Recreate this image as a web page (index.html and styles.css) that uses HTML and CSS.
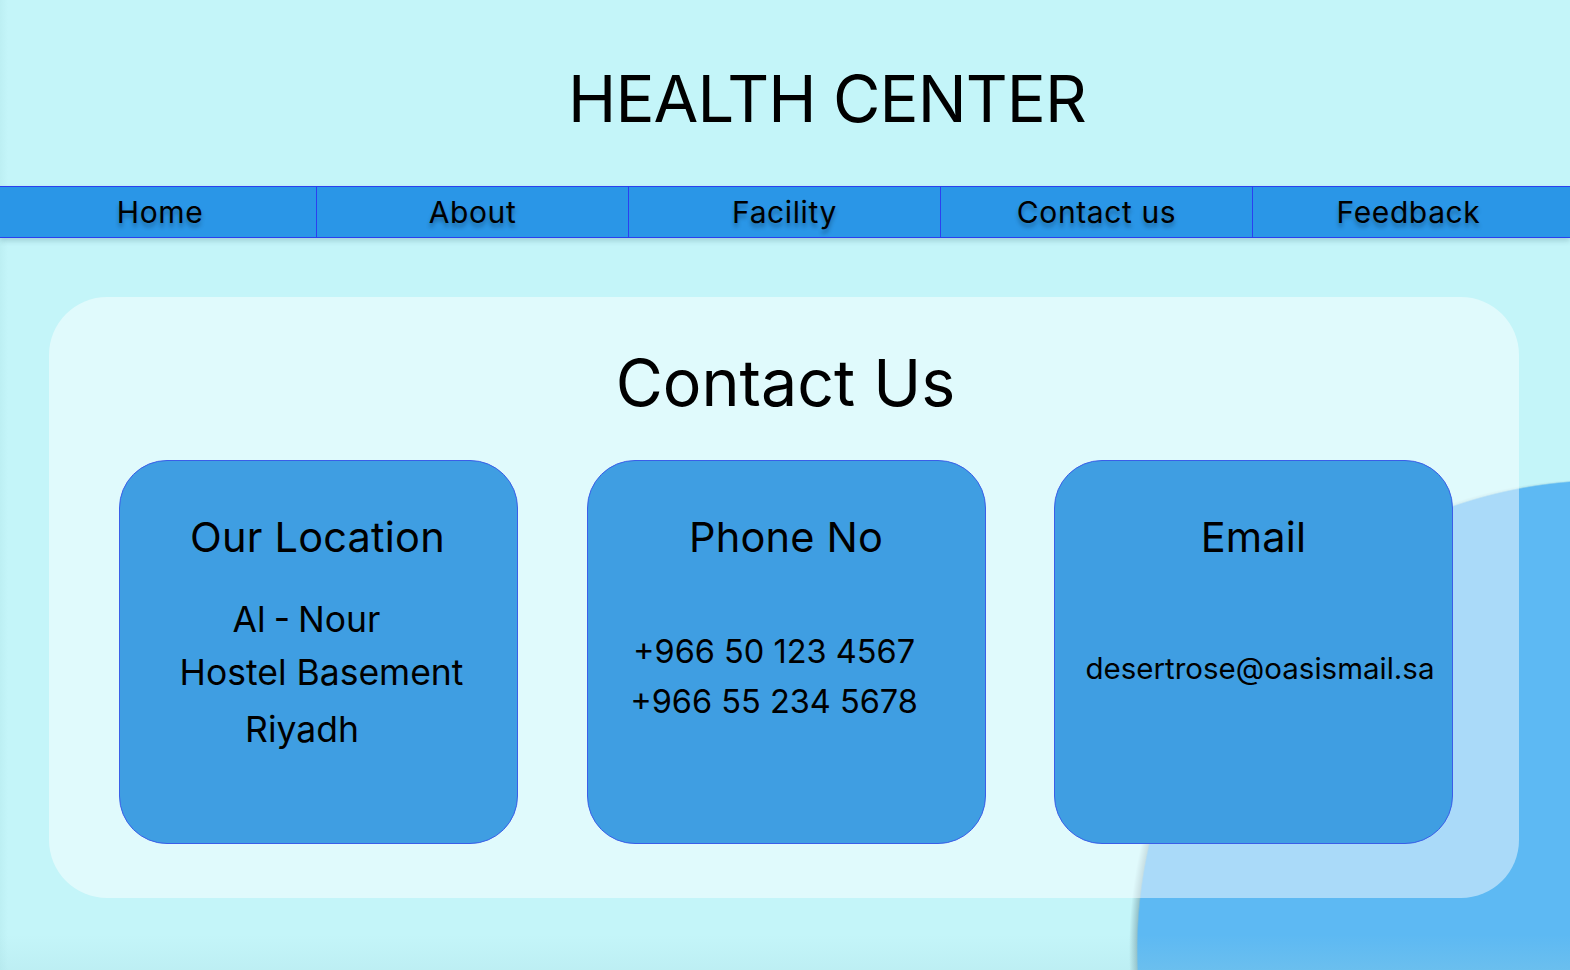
FILE: index.html
```html
<!DOCTYPE html>
<html lang="en">
<head>
<meta charset="utf-8">
<title>Health Center - Contact Us</title>
<link rel="stylesheet" href="styles.css">
</head>
<body>
  <header class="site-header">
    <h1 class="site-title">HEALTH CENTER</h1>
  </header>
  <nav class="main-nav">
    <a class="nav-item" href="#">Home</a>
    <a class="nav-item" href="#">About</a>
    <a class="nav-item" href="#">Facility</a>
    <a class="nav-item" href="#">Contact us</a>
    <a class="nav-item" href="#">Feedback</a>
  </nav>
  <main class="contact-panel">
    <h2 class="contact-heading">Contact Us</h2>
    <div class="card-row">
      <section class="card">
        <h3 class="card-title card-title-loc">Our Location</h3>
        <p class="loc-text">
          <span class="line line-a">Al - Nour</span>
          <span class="line line-b">Hostel Basement</span>
        </p>
        <p class="loc-text loc-city">
          <span class="line line-c">Riyadh</span>
        </p>
      </section>
      <section class="card">
        <h3 class="card-title">Phone No</h3>
        <p class="phone-text">+966 50 123 4567<br>+966 55 234 5678</p>
      </section>
      <section class="card">
        <h3 class="card-title card-title-email">Email</h3>
        <p class="email-text">desertrose@oasismail.sa</p>
      </section>
    </div>
  </main>
</body>
</html>
```

FILE: styles.css
```css
* {
  box-sizing: border-box;
}

html, body {
  height: 100%;
}

body {
  margin: 0;
  overflow: hidden;
  font-family: Inter, "Noto Sans", "Liberation Sans", sans-serif;
  color: #000;
  background:
    linear-gradient(to bottom, rgba(160, 214, 220, 0) 935px, rgba(160, 214, 220, 0.2) 970px),
    linear-gradient(to right, rgba(175, 228, 232, 0.35) 0px, rgba(175, 228, 232, 0) 8px),
    radial-gradient(circle 470px at 1607px 950px, #5db9f3 469px, rgba(93, 185, 243, 0) 470.5px),
    radial-gradient(circle 471px at 1600px 950px, rgba(110, 150, 160, 0.55) 463px, rgba(110, 150, 160, 0) 471px),
    #c4f5f9;
}

.site-header {
  height: 186px;
  padding-top: 60px;
  text-align: center;
}

.site-title {
  margin: 0;
  font-size: 65px;
  font-weight: 400;
  line-height: 1.21;
  letter-spacing: -0.9px;
  padding-left: 84px;
}

.main-nav {
  display: grid;
  grid-template-columns: repeat(5, 312px);
  padding-left: 4px;
  height: 52px;
  background: #2a96e7;
  border-top: 1px solid #2b3ff0;
  border-bottom: 1px solid #2b3ff0;
  box-shadow: 0 3px 5px rgba(40, 90, 110, 0.22);
}

.nav-item {
  display: flex;
  align-items: center;
  justify-content: center;
  color: #000;
  text-decoration: none;
  font-size: 30px;
  letter-spacing: 0.6px;
  text-shadow: 0 4px 4px rgba(0, 0, 0, 0.3);
  border-left: 1px solid #2b3ff0;
  padding-bottom: 1px;
}

.nav-item:first-child {
  border-left: none;
}

.contact-panel {
  width: 1470px;
  height: 601px;
  margin: 59px 0 0 49px;
  padding-top: 47px;
  background: rgba(255, 255, 255, 0.48);
  border-radius: 58px;
}

.contact-heading {
  margin: 0;
  text-align: center;
  font-size: 64.5px;
  font-weight: 400;
  line-height: 1.21;
  padding-left: 3px;
}

.card-row {
  display: flex;
  justify-content: space-between;
  padding: 0 66px 0 70px;
  margin-top: 38px;
}

.card {
  width: 399px;
  height: 384px;
  background: #3f9ee2;
  border: 1px solid #3a5ee8;
  border-radius: 48px;
  padding-top: 51px;
  text-align: center;
}

.card-title {
  margin: 0;
  font-size: 41.5px;
  font-weight: 400;
  line-height: 1.21;
  letter-spacing: 0.2px;
}

.card-title-loc {
  padding-right: 2px;
}

.card-title-email {
  padding-left: 0;
}

.loc-text {
  margin: 31px 0 0;
  font-size: 35.5px;
  line-height: 53px;
}

.loc-city {
  margin-top: 4px;
}

.line {
  display: block;
}

.line-a {
  padding-right: 24px;
  word-spacing: -2px;
}

.line-b {
  padding-left: 6px;
}

.line-c {
  padding-right: 33px;
}

.phone-text {
  margin: 65px 0 0;
  font-size: 32.5px;
  line-height: 50px;
  padding-right: 24px;
}

.email-text {
  margin: 89px 0 0;
  font-size: 29.5px;
  line-height: 1.21;
  padding-left: 13px;
}
```
